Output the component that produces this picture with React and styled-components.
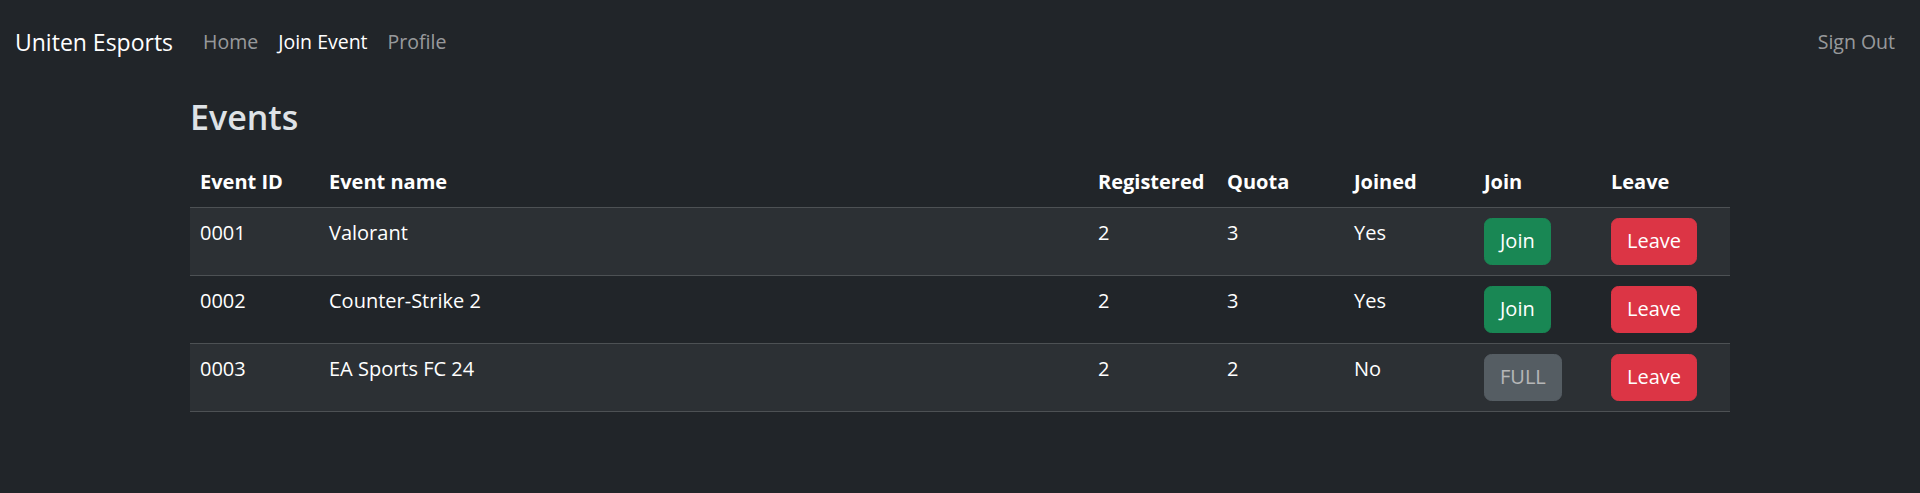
import { createGlobalStyle } from "styled-components";
import styled from "styled-components";

const GlobalStyle = createGlobalStyle`
    body {
        margin: 0;
        background-color: #212529;
        color: #dee2e6;
        font-family: "Open Sans", "Noto Sans", sans-serif;
        font-size: 20px;
        line-height: 1.5;
    }
`;

const Navbar = styled.nav`
    display: flex;
    align-items: center;
    height: 84px;
    padding: 0 15px;
`;

const Brand = styled.a`
    color: #fff;
    font-size: 23px;
    margin-right: 20px;
    text-decoration: none;
`;

const NavList = styled.div`
    display: flex;
    align-items: center;
    flex: 1;
`;

const NavLink = styled.a`
    padding: 0 10px;
    font-size: 19.5px;
    color: ${({ $active }) => ($active ? "#fff" : "rgba(255, 255, 255, 0.55)")};
    text-decoration: none;
    margin-left: ${({ $push }) => ($push ? "auto" : "0")};
`;

const Main = styled.main`
    width: 1540px;
    margin: 0 auto;
`;

const Title = styled.h2`
    margin: 13px 0 19px;
    font-size: 34px;
    font-weight: 600;
    line-height: 1.2;
    color: #dee2e6;
`;

const Table = styled.table`
    width: 100%;
    border-collapse: collapse;
    color: #fff;
    table-layout: fixed;
`;

const Th = styled.th`
    text-align: left;
    padding: 10px;
    line-height: 30px;
    font-weight: 700;
    vertical-align: top;
    border-bottom: 1px solid #4d5154;
    width: ${({ $w }) => $w || "auto"};
`;

const Row = styled.tr`
    background-color: ${({ $striped }) => ($striped ? "#2c3034" : "transparent")};
    border-bottom: 1px solid #4d5154;
`;

const Td = styled.td`
    padding: 10px;
    line-height: 30px;
    vertical-align: top;
`;

const Button = styled.button`
    display: block;
    font-family: inherit;
    font-size: 20px;
    line-height: 30px;
    padding: 7.5px 15px;
    border: 1.25px solid ${({ $bg }) => $bg};
    border-radius: 7.5px;
    background-color: ${({ $bg }) => $bg};
    color: #fff;
    cursor: pointer;

    &:disabled {
        opacity: 0.65;
        cursor: default;
    }
`;

const events = [
    { id: "0001", name: "Valorant", registered: 2, quota: 3, joined: "Yes" },
    { id: "0002", name: "Counter-Strike 2", registered: 2, quota: 3, joined: "Yes" },
    { id: "0003", name: "EA Sports FC 24", registered: 2, quota: 2, joined: "No" },
];

export default function App() {
    return <>
        <GlobalStyle />
        <Navbar>
            <Brand href="#">Uniten Esports</Brand>
            <NavList>
                <NavLink href="#">Home</NavLink>
                <NavLink href="#" $active>Join Event</NavLink>
                <NavLink href="#">Profile</NavLink>
                <NavLink href="#" $push>Sign Out</NavLink>
            </NavList>
        </Navbar>
        <Main>
            <Title>Events</Title>
            <Table>
                <thead>
                    <tr>
                        <Th $w="109px">Event ID</Th>
                        <Th>Event name</Th>
                        <Th $w="109px">Registered</Th>
                        <Th $w="107px">Quota</Th>
                        <Th $w="110px">Joined</Th>
                        <Th $w="107px">Join</Th>
                        <Th $w="109px">Leave</Th>
                    </tr>
                </thead>
                <tbody>
                    {events.map((ev, i) => {
                        const full = ev.registered >= ev.quota;
                        return (
                            <Row key={ev.id} $striped={i % 2 === 0}>
                                <Td>{ev.id}</Td>
                                <Td>{ev.name}</Td>
                                <Td>{ev.registered}</Td>
                                <Td>{ev.quota}</Td>
                                <Td>{ev.joined}</Td>
                                <Td>
                                    {full
                                        ? <Button $bg="#6c757d" disabled>FULL</Button>
                                        : <Button $bg="#198754">Join</Button>}
                                </Td>
                                <Td>
                                    <Button $bg="#dc3545">Leave</Button>
                                </Td>
                            </Row>
                        );
                    })}
                </tbody>
            </Table>
        </Main>
    </>
}
